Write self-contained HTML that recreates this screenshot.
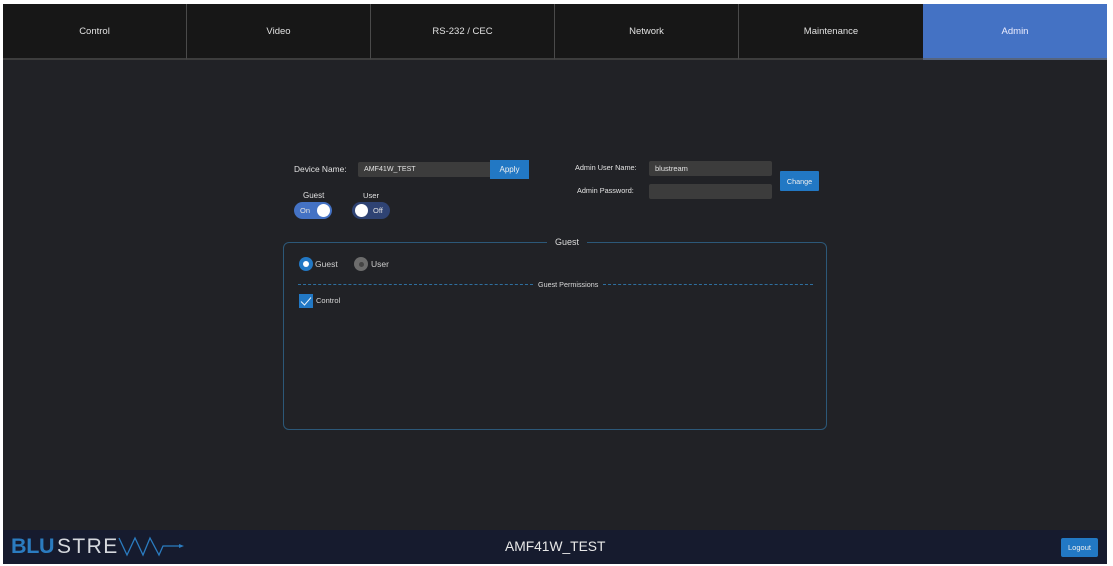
<!DOCTYPE html>
<html><head><meta charset="utf-8">
<style>
*{box-sizing:border-box}
html,body{margin:0;padding:0;width:1113px;height:566px;overflow:hidden;background:#fff;font-family:"Liberation Sans",sans-serif}
.a{position:absolute;white-space:nowrap}
#app{position:absolute;left:3px;top:4px;width:1104px;height:560px;background:#212226;overflow:hidden}
.tab{position:absolute;top:4px;height:56px;background:#171717;color:#e0e0e0;font-size:9.5px;line-height:55px;text-align:center;border-right:1px solid #4a4a4a;border-bottom:2px solid #3d3d3d}
.lbl{color:#e2e2e2;font-size:8px;line-height:10px}
.inp{position:absolute;background:#3c3c3c;border-radius:2px;color:#e2e2e2;font-size:8px;line-height:16px;padding-left:6px}
.btn{position:absolute;background:#2278c4;color:#f0f0f0;font-size:8px;text-align:center}
</style></head><body>
<div id="app"></div>
<div class="tab" style="left:3px;width:184px">Control</div>
<div class="tab" style="left:187px;width:184px">Video</div>
<div class="tab" style="left:371px;width:184px">RS-232 / CEC</div>
<div class="tab" style="left:555px;width:184px">Network</div>
<div class="tab" style="left:739px;width:184px;border-right:0">Maintenance</div>
<div class="tab" style="left:923px;width:184px;background:#4472c4;color:#eef;border:0;border-bottom:2px solid #56657f">Admin</div>

<div class="a lbl" style="left:294px;top:164px;font-size:8.4px">Device Name:</div>
<div class="inp" style="left:358px;top:162px;width:132px;height:15px;line-height:15px;font-size:7.1px;border-radius:2px 0 0 2px">AMF41W_TEST</div>
<div class="btn" style="left:490px;top:160px;width:39px;height:19px;line-height:19px">Apply</div>

<div class="a lbl" style="left:303px;top:191px">Guest</div>
<div class="a lbl" style="left:363px;top:191px;font-size:7.6px">User</div>
<div class="a" style="left:294px;top:202px;width:38px;height:17px;border-radius:9px;background:#4472c4"></div>
<div class="a" style="left:317px;top:204px;width:13px;height:13px;border-radius:50%;background:#fff"></div>
<div class="a" style="left:300px;top:205px;color:#e2e2e2;font-size:7.5px;line-height:11px">On</div>
<div class="a" style="left:352px;top:202px;width:38px;height:17px;border-radius:9px;background:#2f4373"></div>
<div class="a" style="left:355px;top:204px;width:13px;height:13px;border-radius:50%;background:#fff"></div>
<div class="a" style="left:373px;top:205px;color:#e2e2e2;font-size:7.5px;line-height:11px">Off</div>

<div class="a lbl" style="left:575px;top:163px;font-size:7.3px">Admin User Name:</div>
<div class="a lbl" style="left:577px;top:186px;font-size:7.3px">Admin Password:</div>
<div class="inp" style="left:649px;top:161px;width:123px;height:15px;line-height:15px;font-size:7.5px">blustream</div>
<div class="inp" style="left:649px;top:184px;width:123px;height:15px"></div>
<div class="btn" style="left:780px;top:171px;width:39px;height:20px;line-height:21px;border-radius:1px;font-size:7.2px">Change</div>

<div class="a" style="left:283px;top:242px;width:544px;height:188px;border:1px solid #2c5878;border-radius:6px"></div>
<div class="a" style="left:547px;top:237px;width:40px;height:11px;background:#212226;color:#dcdcdc;font-size:9px;line-height:11px;text-align:center">Guest</div>

<div class="a" style="left:299px;top:257px;width:14px;height:14px;border-radius:50%;background:#2278c4"></div>
<div class="a" style="left:303px;top:261px;width:6px;height:6px;border-radius:50%;background:#fff"></div>
<div class="a" style="left:315px;top:258px;color:#cfcfcf;font-size:8.5px;line-height:12px">Guest</div>
<div class="a" style="left:354px;top:257px;width:14px;height:14px;border-radius:50%;background:#6c6c6c"></div>
<div class="a" style="left:358.5px;top:261.5px;width:5px;height:5px;border-radius:50%;background:#444"></div>
<div class="a" style="left:371px;top:258px;color:#cfcfcf;font-size:8.5px;line-height:12px">User</div>

<div class="a" style="left:298px;top:284px;width:235px;border-top:1px dashed #2e6f9f"></div>
<div class="a" style="left:538px;top:280px;color:#d8d8d8;font-size:7.2px;line-height:10px">Guest Permissions</div>
<div class="a" style="left:603px;top:284px;width:210px;border-top:1px dashed #2e6f9f"></div>

<div class="a" style="left:299px;top:294px;width:14px;height:14px;background:#2278c4"></div>
<svg class="a" style="left:299px;top:294px" width="14" height="14" viewBox="0 0 14 14"><path d="M2 7.5L5.5 11L12 3.5" fill="none" stroke="#e8f2fa" stroke-width="1"/></svg>
<div class="a" style="left:316px;top:296px;color:#d8d8d8;font-size:7.5px;line-height:10px">Control</div>

<div class="a" style="left:3px;top:530px;width:1104px;height:34px;background:#161b2e"></div>
<div class="a" style="left:11px;top:534px;color:#2b7cc0;font-size:21.5px;font-weight:bold;line-height:25px;letter-spacing:-.3px">BLU</div>
<div class="a" style="left:57px;top:534px;color:#d5d8dd;font-size:21px;line-height:25px;letter-spacing:1.4px">STRE</div>
<svg class="a" style="left:118px;top:534px" width="68" height="24" viewBox="0 0 68 24"><path d="M1 4L9 21L17 4L25 21L32 4L41 21L45 12H62" stroke="#2b7cc0" stroke-width="1.3" fill="none"/><path d="M61 10L66 12L61 14Z" fill="#2b7cc0"/></svg>
<div class="a" style="left:505px;top:538px;color:#e8e8e8;font-size:13.8px;line-height:17px">AMF41W_TEST</div>
<div class="btn" style="left:1061px;top:538px;width:37px;height:19px;line-height:19px;border-radius:2px;font-size:7.5px">Logout</div>
</body></html>
